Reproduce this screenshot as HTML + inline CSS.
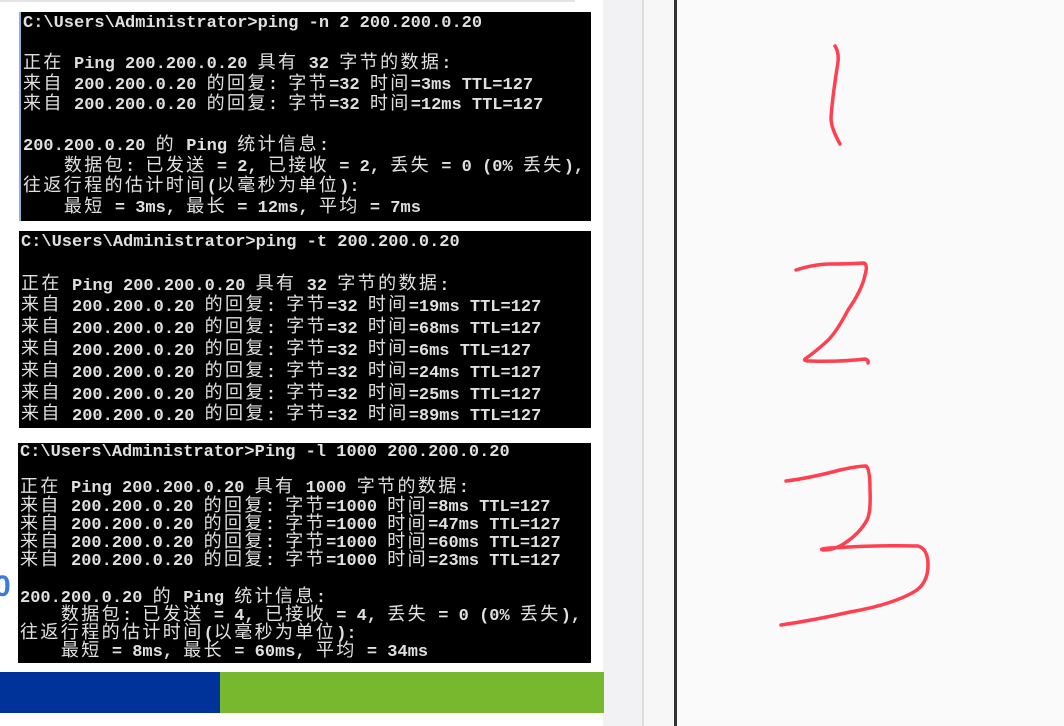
<!DOCTYPE html>
<html><head><meta charset="utf-8">
<style>
html,body{margin:0;padding:0;}
body{width:1064px;height:726px;position:relative;overflow:hidden;background:#fff;font-family:"Liberation Mono","Noto Sans CJK SC",monospace;}
.strip1{position:absolute;left:603px;top:0;width:39px;height:726px;background:#f2f2f4;}
.strip2{position:absolute;left:642px;top:0;width:2px;height:726px;background:#dcdcdc;}
.strip3{position:absolute;left:644px;top:0;width:30px;height:726px;background:#f7f7f7;}
.vline{position:absolute;left:674px;top:0;width:3px;height:726px;background:#333;}
.right{position:absolute;left:677px;top:0;width:387px;height:726px;background:#fafafa;}
.topline{position:absolute;left:0;top:0;width:575px;height:2px;background:#e4e4e4;}
.term{position:absolute;background:#000;color:#e0e0e0;font-size:17px;font-weight:bold;white-space:pre;overflow:hidden;box-sizing:border-box;padding-left:2px;}
.term div{height:var(--lh);line-height:var(--lh);overflow:visible;}
.term .c{font-family:"Noto Sans CJK SC",sans-serif;font-weight:normal;display:inline-block;height:var(--lh);line-height:var(--lh);vertical-align:top;font-size:18px;letter-spacing:2.4px;position:relative;top:-4px;}
#t1{left:19px;top:12px;width:572px;height:209px;--lh:20.5px;border-left:2px solid #8fb0d8;padding-top:2px;}
#t2{left:19px;top:231px;width:572px;height:197px;--lh:21.8px;padding-top:1px;}
#t3{left:18px;top:443px;width:573px;height:220px;--lh:18.2px;padding-top:1px;}
.blue{position:absolute;left:0;top:672px;width:220px;height:41px;background:#003399;}
.green{position:absolute;left:220px;top:672px;width:384px;height:41px;background:#77b82e;}
.zero{position:absolute;left:-6px;top:570px;color:#3a7bd5;font:bold 30px "Liberation Sans",sans-serif;}
svg{position:absolute;left:0;top:0;}
</style></head><body>
<div class="topline"></div>
<div class="strip1"></div><div class="strip2"></div><div class="strip3"></div><div class="vline"></div><div class="right"></div>
<div class="zero">0</div>
<div class="term" id="t1">C:\Users\Administrator&gt;ping -n 2 200.200.0.20

正在 Ping 200.200.0.20 具有 32 字节的数据:
来自 200.200.0.20 的回复: 字节=32 时间=3ms TTL=127
来自 200.200.0.20 的回复: 字节=32 时间=12ms TTL=127

200.200.0.20 的 Ping 统计信息:
    数据包: 已发送 = 2, 已接收 = 2, 丢失 = 0 (0% 丢失),
往返行程的估计时间(以毫秒为单位):
    最短 = 3ms, 最长 = 12ms, 平均 = 7ms</div>
<div class="term" id="t2">C:\Users\Administrator&gt;ping -t 200.200.0.20

正在 Ping 200.200.0.20 具有 32 字节的数据:
来自 200.200.0.20 的回复: 字节=32 时间=19ms TTL=127
来自 200.200.0.20 的回复: 字节=32 时间=68ms TTL=127
来自 200.200.0.20 的回复: 字节=32 时间=6ms TTL=127
来自 200.200.0.20 的回复: 字节=32 时间=24ms TTL=127
来自 200.200.0.20 的回复: 字节=32 时间=25ms TTL=127
来自 200.200.0.20 的回复: 字节=32 时间=89ms TTL=127</div>
<div class="term" id="t3">C:\Users\Administrator&gt;Ping -l 1000 200.200.0.20

正在 Ping 200.200.0.20 具有 1000 字节的数据:
来自 200.200.0.20 的回复: 字节=1000 时间=8ms TTL=127
来自 200.200.0.20 的回复: 字节=1000 时间=47ms TTL=127
来自 200.200.0.20 的回复: 字节=1000 时间=60ms TTL=127
来自 200.200.0.20 的回复: 字节=1000 时间=23ms TTL=127

200.200.0.20 的 Ping 统计信息:
    数据包: 已发送 = 4, 已接收 = 4, 丢失 = 0 (0% 丢失),
往返行程的估计时间(以毫秒为单位):
    最短 = 8ms, 最长 = 60ms, 平均 = 34ms</div>
<div class="blue"></div><div class="green"></div>
<svg width="1064" height="726" fill="none" stroke="#ff4050" stroke-width="3.5" stroke-linecap="round" stroke-linejoin="round">
<path d="M835 46 Q839 52 838 62 Q832 100 831 118 Q831 128 840 144"/>
<path d="M796 270 Q815 264 830 264 Q850 264 864 263 Q868 265 865 275 Q862 290 848 310 Q835 335 825 343 Q815 352 805 359 Q803 361 810 361 Q840 362 865 359 Q869 360 868 363"/>
<path d="M786 481 Q810 478 840 470 Q858 466 866 466 Q870 468 870 490 Q871 512 867 520 Q860 533 845 543 Q835 550 823 550 Q818 549 830 548 Q880 545 918 546 Q928 549 928 565 Q928 585 912 593 Q890 605 850 612 Q815 620 781 625"/>
</svg>
<script>
document.querySelectorAll('.term').forEach(function(t){
 var lines=t.innerHTML.split('\n');
 t.innerHTML=lines.map(function(l){
  return '<div>'+(l.replace(/([\u3000-\u9fff\uff00-\uffef]+)/g,'<span class="c">$1</span>')||' ')+'</div>';
 }).join('');
});
</script>
</body></html>
